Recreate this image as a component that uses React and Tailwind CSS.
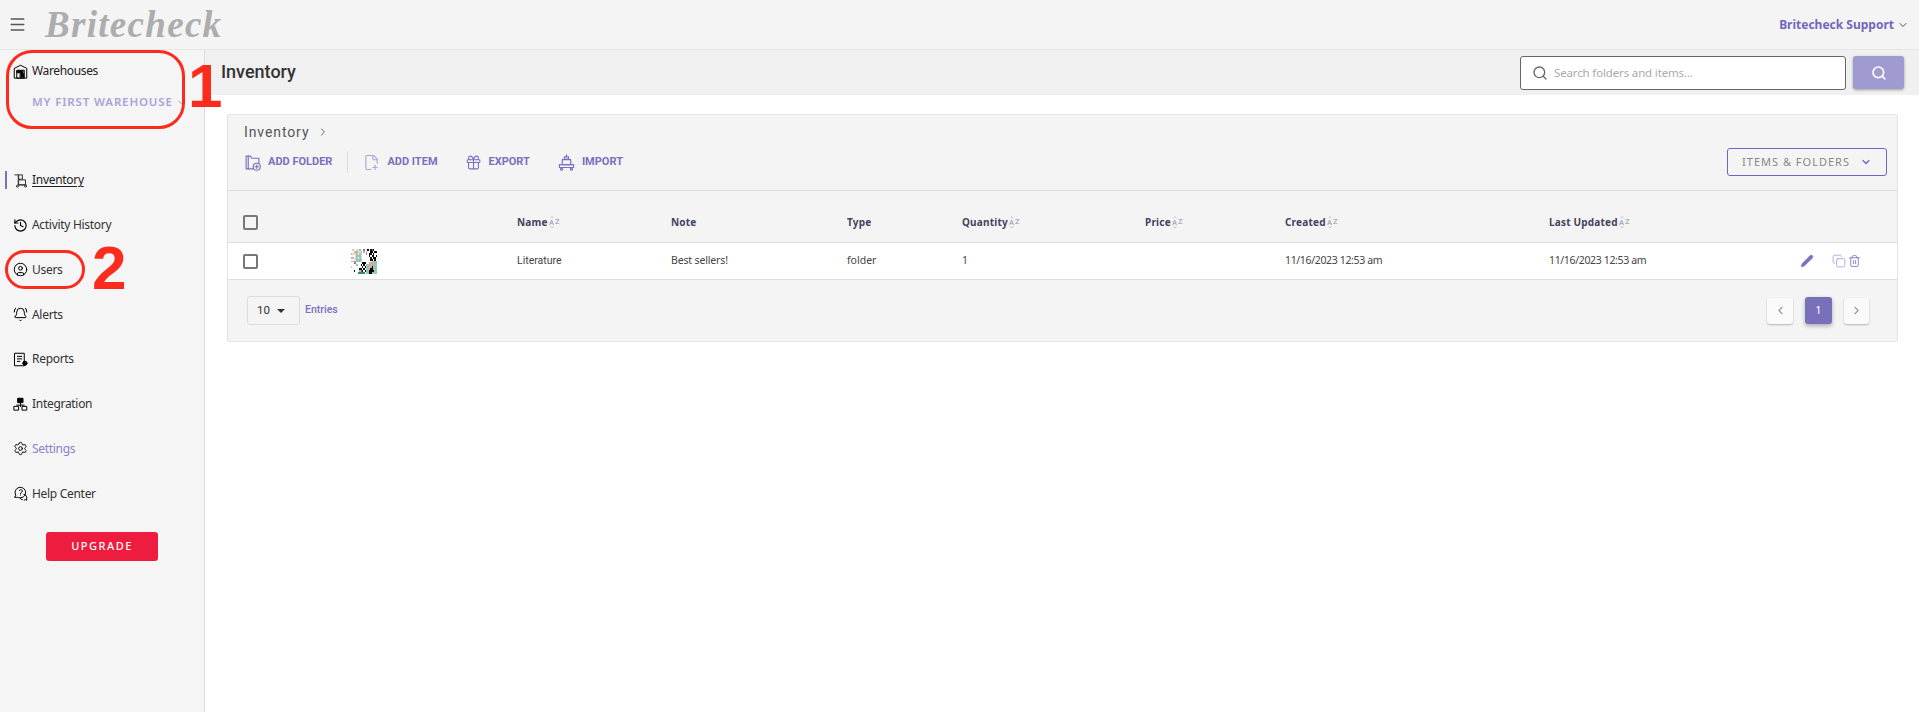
import React from "react";
import { Menu, ChevronDown, ChevronRight, ChevronLeft, Search, Pencil, Copy, Trash2, History, CircleUser, BellRing, Settings, Gift, FilePlus2 } from "lucide-react";

const sans = "font-['Noto_Sans','Liberation_Sans',sans-serif]";

function Box({ children, className = "" }) {
  return (
    <svg viewBox="0 0 24 24" fill="none" stroke="currentColor" strokeWidth="1.6" strokeLinecap="round" strokeLinejoin="round" className={className}>
      {children}
    </svg>
  );
}

const WarehouseIcon = () => (
  <Box className="w-[15px] h-[15px] text-black">
    <path d="M2 22V7l10-5 10 5v15z" />
    <path d="M6 22V10h12v12z" />
    <path d="M12 15h5v6h-5zM7 11h9v3H7z" fill="currentColor" />
  </Box>
);
const CartIcon = () => (
  <Box className="w-[15px] h-[15px] text-[#333]">
    <path d="M3 3h6v16H21" />
    <path d="M9 3h6v7H9zM9 11h11v8H9z" />
    <circle cx="7" cy="21" r="1.6" />
    <circle cx="20" cy="21" r="1.6" />
  </Box>
);
const ReportIcon = () => (
  <Box className="w-[15px] h-[15px] text-black">
    <path d="M3 2h15v20H3z" />
    <path d="M7 7h7M7 11h7M7 15h4" />
    <circle cx="19" cy="18" r="3.4" fill="currentColor" />
  </Box>
);
const IntegrationIcon = () => (
  <Box className="w-[15px] h-[15px] text-black">
    <path d="M8 2h8v7H8z" fill="currentColor" />
    <path d="M12 9v6M6 13h12" />
    <path d="M2 15h7v6H2zM15 15h7v6h-7z" />
  </Box>
);
const HelpIcon = () => (
  <Box className="w-[15px] h-[15px] text-black">
    <path d="M3 18l1.4-3.2A8.5 8.5 0 1 1 9 18.6" />
    <path d="M3 18c1.5.6 3 .6 4.2 0" />
    <path d="M10.2 7.4a2.4 2.4 0 1 1 3 3c-.8.4-1.2.9-1.2 1.6M12 14.2v.1" />
    <path d="M15 22a4 4 0 0 1-3.5-2.3M17.5 13.5a5 5 0 0 1 4 7.5l1 1.5-2.5-.5a5 5 0 0 1-2 .5" />
  </Box>
);
const FolderAdd = () => (
  <Box className="w-[17px] h-[17px] text-[#7a70c0]">
    <path d="M13 21H3V3h6l2 3h10v7" />
    <path d="M6 3v18" />
    <circle cx="18" cy="18" r="5" />
    <path d="M18 15.5v5M15.5 18h5" />
  </Box>
);
const ImportIcon = () => (
  <Box className="w-[17px] h-[17px] text-[#7a70c0]">
    <path d="M9 4h6v3H9zM12 1v3" />
    <path d="M6 8h12v7H6z" />
    <path d="M2 15h20v4H2z" />
    <circle cx="5" cy="21.5" r="1.5" />
    <circle cx="19" cy="21.5" r="1.5" />
  </Box>
);
const SortIcon = () => (
  <svg viewBox="0 0 12 12" className="ml-[1px] w-[12px] h-[12px]" fill="none" stroke="#aeaeba" strokeWidth="0.7">
    <path d="M1.5 2 L3 0.6 L4.5 2M1.5 10.4 L3 11.8 L4.5 10.4" />
    <text x="0" y="9" fontSize="7.5" fill="#aeaeba" stroke="none" fontFamily="Roboto, sans-serif">A</text>
    <text x="6" y="8" fontSize="7.5" fill="#aeaeba" stroke="none" fontFamily="Roboto, sans-serif">Z</text>
  </svg>
);

const QR = [
  "fdffaa9ffbff0f0e0ff",
  "ffcc9aa9fcf2ff00f00",
  "caaa9f9afff5f00f0ff",
  "fffa9c9afffff0f00f0",
  "ccfa9f9affffff0f00f",
  "ffaa9999ffffff00f0f",
  "9999999ffffffff9999",
  "ffb5ffff000ffccc999",
  "ffffcff0f0f99ccc999",
  "dfffffff0f099cc0c99",
  "ffffff00f0f99c00c99",
  "ff0fff9e0f099000099",
  "fffffeeeeef99009999",
];
const colours = { f: "#ffffff", a: "#e7d9c6", "9": "#93c8b8", c: "#d8aaa0", "0": "#0b0b0b", b: "#8a6fd8", "5": "#e35a9e", d: "#e8c0c0", "2": "#e8a090", e: "#3f8a5a" };
function Thumb() {
  return (
    <svg viewBox="0 0 19 13" shapeRendering="crispEdges" className="w-[26px] h-[25px]" preserveAspectRatio="none">
      {QR.map((row, y) =>
        row.split("").map((c, x) => <rect key={x + "-" + y} x={x} y={y} width="1" height="1" fill={colours[c] || "#fff"} />)
      )}
    </svg>
  );
}

const nav = [
  { label: "Activity History", icon: <History className="w-[15px] h-[15px] text-black" strokeWidth={1.8} /> },
  { label: "Users", icon: <CircleUser className="w-[15px] h-[15px] text-black" strokeWidth={1.6} /> },
  { label: "Alerts", icon: <BellRing className="w-[15px] h-[15px] text-black" strokeWidth={1.6} /> },
  { label: "Reports", icon: <ReportIcon /> },
  { label: "Integration", icon: <IntegrationIcon /> },
  { label: "Settings", icon: <Settings className="w-[15px] h-[15px] text-black" strokeWidth={1.5} />, accent: true },
  { label: "Help Center", icon: <HelpIcon /> },
];

const COLS = "grid-cols-[108px_166px_154px_176px_115px_183px_140px_264px_251px_1fr]";

function Head({ children, sort }) {
  return (
    <div className="flex items-center text-[10px] font-bold text-[#44425e] tracking-[0.2px]">
      {children}
      {sort && <SortIcon />}
    </div>
  );
}

function ToolItem({ icon, label, className = "" }) {
  return (
    <div className={"flex items-center gap-[7px] " + className}>
      {icon}
      <span className="text-[11px] font-bold text-[#7a70c0]">{label}</span>
    </div>
  );
}

function Check() {
  return <div className="w-[15px] h-[15px] rounded-[2px] border-2 border-[#777] bg-transparent" />;
}

export default function App() {
  return (
    <div className={"relative min-h-screen w-full flex flex-col bg-white overflow-hidden " + sans}>
      <header className="h-[50px] shrink-0 flex items-center bg-[#f4f4f4] border-b border-[#e6e6e6]">
        <Menu className="ml-[8px] w-[19px] h-[19px] text-[#555]" strokeWidth={1.7} />
        <span className="ml-[18px] font-['Liberation_Serif',serif] italic font-bold text-[37px] leading-none text-[#adadad] tracking-[1.3px]">Britecheck</span>
        <div className="ml-auto mr-[10px] flex items-center gap-[3px]">
          <span className="text-[12px] font-bold text-[#7268bd]">Britecheck Support</span>
          <ChevronDown className="w-[12px] h-[12px] text-[#555]" strokeWidth={2} />
        </div>
      </header>

      <div className="flex-1 flex min-h-[662px]">
        <aside className="w-[205px] shrink-0 bg-[#f5f5f5] border-r border-[#dcdcdc] flex flex-col">
          <div className="mt-[12px] ml-[13px] flex items-center gap-[4px] h-[18px]">
            <WarehouseIcon />
            <span className="text-[12px] text-[#222] tracking-[-0.35px]">Warehouses</span>
          </div>
          <div className="mt-[13px] ml-[32px] flex items-center gap-[3px] h-[18px]">
            <span className="text-[11.5px] font-semibold tracking-[0.85px] text-[#a9a3da] whitespace-nowrap">MY FIRST WAREHOUSE</span>
            <ChevronDown className="w-[11px] h-[11px] text-[#9a9a9a]" strokeWidth={2} />
          </div>

          <div className="mt-[60px] h-[18px] flex items-center relative">
            <span className="ml-[5px] w-[2px] h-[18px] bg-[#7a70c0]" />
            <span className="ml-[6px]"><CartIcon /></span>
            <span className="ml-[4px] text-[12px] text-[#222] underline underline-offset-2 tracking-[-0.3px]">Inventory</span>
          </div>

          <div className="mt-[27px] flex flex-col gap-[26.8px]">
            {nav.map((n) => (
              <div key={n.label} className="h-[18px] ml-[13px] flex items-center gap-[4px]">
                {n.icon}
                <span className={"text-[12px] tracking-[-0.3px] " + (n.accent ? "text-[#8a82cc]" : "text-[#333]")}>{n.label}</span>
              </div>
            ))}
          </div>

          <button className="mt-[29px] ml-[46px] w-[112px] h-[29px] rounded-[3px] bg-[#ee1c3f] text-white text-[11px] font-medium tracking-[1.5px] flex items-center justify-center">
            UPGRADE
          </button>
        </aside>

        <main className="flex-1 min-w-0 flex flex-col">
          <div className="h-[45px] shrink-0 bg-[#f0f0f0] flex items-center pl-[16px] pr-[15px]">
            <h1 className="-mt-[2px] font-['Roboto',sans-serif] font-medium text-[18px] text-[#333]">Inventory</h1>
            <div className="ml-auto w-[326px] h-[34px] rounded-[3px] bg-white border border-[#666] flex items-center pl-[11px]">
              <Search className="w-[16px] h-[16px] text-[#666]" strokeWidth={2} />
              <span className="ml-[6px] text-[11.5px] text-[#aaa] tracking-[-0.15px]">Search folders and items...</span>
            </div>
            <div className="ml-[7px] w-[51px] h-[33px] rounded-[3px] bg-[#9f9ad0] shadow-[0_1px_3px_rgba(0,0,0,0.35)] flex items-center justify-center">
              <Search className="w-[16px] h-[16px] text-white" strokeWidth={2.4} />
            </div>
          </div>

          <div className="mt-[19px] ml-[22px] mr-[21px] rounded-[3px] border border-[#e3e3e3] bg-[#f4f4f4] h-[228px] flex flex-col">
            <div className="h-[76px] shrink-0 pl-[16px] pr-[10px] border-b border-[#dedede] relative">
              <div className="pt-[5px] flex items-center h-[29px] font-['Roboto',sans-serif]">
                <span className="text-[14px] text-[#555] tracking-[0.9px]">Inventory</span>
                <ChevronRight className="ml-[8px] w-[12px] h-[12px] text-[#666]" strokeWidth={2} />
              </div>
              <div className="flex items-center h-[28px] mt-[4px] font-['Roboto',sans-serif]">
                <ToolItem icon={<FolderAdd />} label="ADD FOLDER" />
                <span className="ml-[15px] w-px h-[22px] bg-[#dcdcdc]" />
                <ToolItem className="ml-[15px]" icon={<FilePlus2 className="w-[17px] h-[17px] text-[#a9a3da]" strokeWidth={1.5} />} label="ADD ITEM" />
                <ToolItem className="ml-[27px]" icon={<Gift className="w-[17px] h-[17px] text-[#7a70c0]" strokeWidth={1.5} />} label="EXPORT" />
                <ToolItem className="ml-[28px]" icon={<ImportIcon />} label="IMPORT" />
                <div className="ml-auto w-[160px] h-[28px] rounded-[3px] border border-[#6f63c4] flex items-center justify-center gap-[10px]">
                  <span className="text-[11px] text-[#888] tracking-[1px] font-['Noto_Sans',sans-serif]">ITEMS &amp; FOLDERS</span>
                  <ChevronDown className="w-[12px] h-[12px] text-[#6f63c4]" strokeWidth={2.5} />
                </div>
              </div>
            </div>

            <div className={"h-[51px] shrink-0 grid items-center pl-[15px] pt-[11px] " + COLS}>
              <Check />
              <div />
              <Head sort>Name</Head>
              <Head>Note</Head>
              <Head>Type</Head>
              <Head sort>Quantity</Head>
              <Head sort>Price</Head>
              <Head sort>Created</Head>
              <Head sort>Last Updated</Head>
              <div />
            </div>

            <div className={"h-[38px] shrink-0 grid items-center pl-[15px] bg-white border-y border-[#dedede] text-[10.5px] text-[#444] " + COLS}>
              <Check />
              <Thumb />
              <div className="font-['Roboto',sans-serif]">Literature</div>
              <div className="tracking-[-0.15px]">Best sellers!</div>
              <div>folder</div>
              <div>1</div>
              <div />
              <div className="tracking-[-0.35px]">11/16/2023 12:53 am</div>
              <div className="tracking-[-0.35px]">11/16/2023 12:53 am</div>
              <div className="flex items-center text-[#7a70c0]">
                <Pencil className="w-[14px] h-[14px] fill-[#7a70c0] text-[#7a70c0]" strokeWidth={1} />
                <Copy className="ml-[18px] w-[14px] h-[14px] text-[#a9a3da]" strokeWidth={1.5} />
                <Trash2 className="ml-[2px] w-[13px] h-[14px]" strokeWidth={1.5} />
              </div>
            </div>

            <div className="flex-1 flex items-center pl-[19px] pr-[28px]">
              <div className="w-[53px] h-[29px] rounded-[3px] border border-[#dcdcdc] flex items-center pl-[9px] gap-[7px] text-[11.5px] text-[#333] font-['Roboto',sans-serif]">
                10
                <span className="w-0 h-0 border-x-[4px] border-x-transparent border-t-[4px] border-t-[#333]" />
              </div>
              <span className="ml-[5px] -mt-[1px] text-[10.5px] font-medium text-[#7a70c0] font-['Roboto',sans-serif]">Entries</span>
              <div className="ml-auto flex items-center gap-[12px]">
                <div className="w-[26px] h-[26px] rounded-[3px] bg-[#fafafa] shadow-[0_1px_2px_rgba(0,0,0,0.25)] flex items-center justify-center">
                  <ChevronLeft className="w-[13px] h-[13px] text-[#999]" strokeWidth={2} />
                </div>
                <div className="w-[27px] h-[27px] rounded-[3px] bg-[#7970bc] shadow-[0_2px_4px_rgba(0,0,0,0.3)] flex items-center justify-center text-[11px] text-white">1</div>
                <div className="w-[25px] h-[26px] rounded-[3px] bg-[#fafafa] shadow-[0_1px_2px_rgba(0,0,0,0.25)] flex items-center justify-center">
                  <ChevronRight className="w-[13px] h-[13px] text-[#999]" strokeWidth={2} />
                </div>
              </div>
            </div>
          </div>
        </main>
      </div>

      <div className="absolute left-[6px] top-[50px] w-[179px] h-[79px] rounded-[26px] border-[3px] border-[#fb2b1e]" />
      <div className="absolute left-[5px] top-[250px] w-[80px] h-[39px] rounded-[20px] border-[3px] border-[#fb2b1e]" />
      <span className="absolute left-[188px] top-[50px] font-['Liberation_Sans',sans-serif] font-bold text-[62px] leading-[72px] text-[#fb2b1e]">1</span>
      <span className="absolute left-[92px] top-[232px] font-['Liberation_Sans',sans-serif] font-bold text-[62px] leading-[72px] text-[#fb2b1e]">2</span>
    </div>
  );
}
